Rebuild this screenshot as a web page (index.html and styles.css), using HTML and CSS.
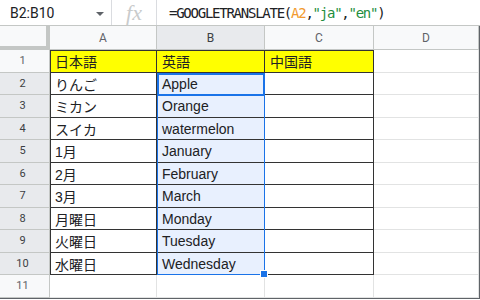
FILE: index.html
```html
<!DOCTYPE html>
<html lang="en">
<head>
    <meta charset="UTF-8">
    <title>GOOGLETRANSLATE</title>
    <link rel="stylesheet" href="styles.css">
</head>
<body>
    <div class="formula-bar">
        <div class="name-box">B2:B10<span class="caret"></span></div>
        <div class="fx">fx</div>
        <div class="formula">=GOOGLETRANSLATE(<span class="ref">A2</span>,<span class="str">"ja"</span>,<span class="str">"en"</span>)</div>
    </div>

    <div class="sheet">
        <!-- column headers -->
        <div class="corner"></div>
        <div class="ch">A</div>
        <div class="ch sel-h">B</div>
        <div class="ch">C</div>
        <div class="ch">D</div>

        <div class="rh">1</div>
        <div class="c t top left y">日本語</div>
        <div class="c t top y">英語</div>
        <div class="c t top y">中国語</div>
        <div class="c"></div>

        <div class="rh sel-h">2</div>
        <div class="c t left">りんご</div>
        <div class="c t sel">Apple</div>
        <div class="c t"></div>
        <div class="c"></div>

        <div class="rh sel-h">3</div>
        <div class="c t left">ミカン</div>
        <div class="c t sel">Orange</div>
        <div class="c t"></div>
        <div class="c"></div>

        <div class="rh sel-h">4</div>
        <div class="c t left">スイカ</div>
        <div class="c t sel">watermelon</div>
        <div class="c t"></div>
        <div class="c"></div>

        <div class="rh sel-h">5</div>
        <div class="c t left">1月</div>
        <div class="c t sel">January</div>
        <div class="c t"></div>
        <div class="c"></div>

        <div class="rh sel-h">6</div>
        <div class="c t left">2月</div>
        <div class="c t sel">February</div>
        <div class="c t"></div>
        <div class="c"></div>

        <div class="rh sel-h">7</div>
        <div class="c t left">3月</div>
        <div class="c t sel">March</div>
        <div class="c t"></div>
        <div class="c"></div>

        <div class="rh sel-h">8</div>
        <div class="c t left">月曜日</div>
        <div class="c t sel">Monday</div>
        <div class="c t"></div>
        <div class="c"></div>

        <div class="rh sel-h">9</div>
        <div class="c t left">火曜日</div>
        <div class="c t sel">Tuesday</div>
        <div class="c t"></div>
        <div class="c"></div>

        <div class="rh sel-h">10</div>
        <div class="c t left">水曜日</div>
        <div class="c t sel">Wednesday</div>
        <div class="c t"></div>
        <div class="c"></div>

        <div class="rh">11</div>
        <div class="c"></div>
        <div class="c"></div>
        <div class="c"></div>
        <div class="c"></div>

        <!-- selection overlay B2:B10 -->
        <div class="range"></div>
        <div class="active"></div>
        <div class="handle"></div>
    </div>
</body>
</html>
```

FILE: styles.css
```css
body {
    margin: 0;
    width: 480px;
    height: 300px;
    overflow: hidden;
    background-color: white;
    font-family: "Liberation Sans", Arial, "Noto Sans CJK JP", sans-serif;
    color: #202124;
}
.formula-bar {
    display: flex;
    align-items: stretch;
    height: 25px;
    border-bottom: 1px solid #c4c7c5;
}
.name-box {
    display: flex;
    align-items: center;
    width: 112px;
    box-sizing: border-box;
    padding-left: 10px;
    border-right: 1px solid #dadce0;
    font-family: Roboto, sans-serif;
    font-size: 14px;
    position: relative;
}
.caret {
    position: absolute;
    left: 96px;
    top: 12px;
    border-left: 4px solid transparent;
    border-right: 4px solid transparent;
    border-top: 4px solid #5f6368;
}
.fx {
    display: flex;
    align-items: center;
    justify-content: center;
    width: 44px;
    border-right: 1px solid #dadce0;
    font-family: "Liberation Serif", serif;
    font-style: italic;
    font-size: 22px;
    color: #c9cbcc;
}
.formula {
    display: flex;
    align-items: center;
    padding-left: 12px;
    font-family: "DejaVu Sans Mono", monospace;
    font-size: 14px;
    letter-spacing: -1.25px;
    color: #202124;
    white-space: pre;
}
.ref {
    color: #f29a2e;
}
.str {
    color: #1e8e3e;
}
.sheet {
    position: relative;
    display: grid;
    grid-template-columns: 50px 107px 108px 109px 105px;
    grid-template-rows: 24px repeat(11, 22.5px);
    border-bottom: 1px solid #5f6368;
    border-right: 1px solid #5f6368;
}
.corner {
    background-color: #f8f9fa;
    box-shadow: inset -4px -4px 0 #c4c7c5;
}
.ch {
    display: flex;
    align-items: center;
    justify-content: center;
    background-color: #f8f9fa;
    border-right: 1px solid #c4c7c5;
    border-bottom: 1px solid #c4c7c5;
    font-family: Roboto, sans-serif;
    font-size: 12px;
    color: #5f6368;
}
.rh {
    display: flex;
    align-items: center;
    justify-content: center;
    padding-right: 4px;
    background-color: #f8f9fa;
    border-right: 1px solid #c4c7c5;
    border-bottom: 1px solid #c4c7c5;
    font-family: Roboto, sans-serif;
    font-size: 11px;
    color: #5f6368;
}
.sel-h {
    background-color: #e8eaed;
    color: #3c4043;
}
.c {
    display: flex;
    align-items: center;
    padding: 1px 4px 0 5px;
    border-right: 1px solid #e2e3e3;
    border-bottom: 1px solid #e2e3e3;
    font-size: 14px;
    white-space: nowrap;
    overflow: hidden;
}
.c.t {
    border-color: #333;
}
.c.top {
    box-shadow: inset 0 1px 0 #333;
}
.c.left {
    box-shadow: inset 1px 0 0 #333;
}
.c.top.left {
    box-shadow: inset 1px 1px 0 #333;
}
.y {
    background-color: #ffff00;
}
.sel {
    background-color: #e8f0fe;
}
.range {
    position: absolute;
    left: 157px;
    top: 46.5px;
    width: 108px;
    height: 202.5px;
    box-sizing: border-box;
    border: 1px solid #1a73e8;
}
.active {
    position: absolute;
    left: 157px;
    top: 46.5px;
    width: 108px;
    height: 23px;
    box-sizing: border-box;
    border: 2px solid #1a73e8;
}
.handle {
    position: absolute;
    left: 261px;
    top: 245px;
    width: 6px;
    height: 6px;
    background-color: #1a73e8;
    border: 1px solid white;
    box-sizing: content-box;
    margin: -1px 0 0 -1px;
}
```
